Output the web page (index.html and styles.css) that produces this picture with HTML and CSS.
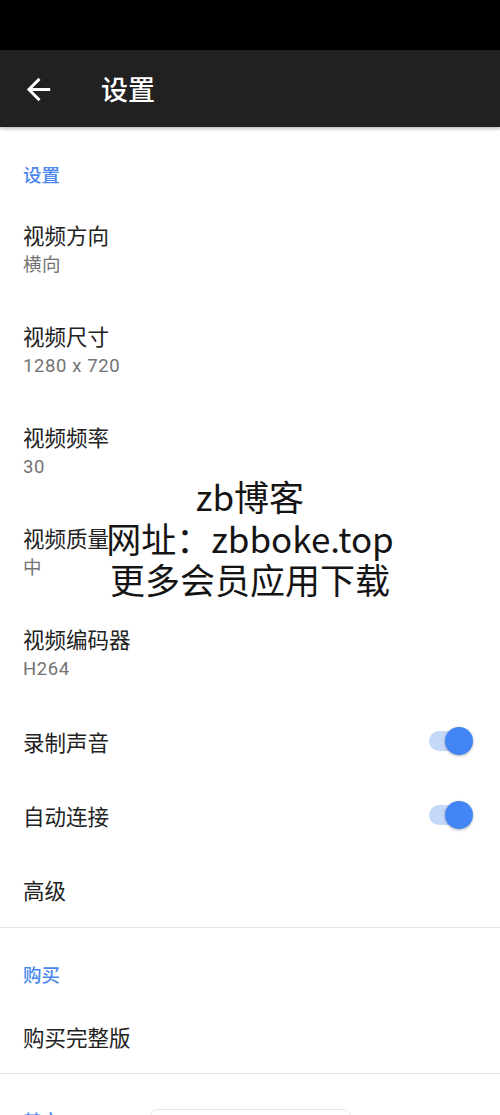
FILE: index.html
```html
<!DOCTYPE html>
<html lang="zh-CN">
<head>
<meta charset="utf-8">
<title>设置</title>
<link rel="stylesheet" href="styles.css">
</head>
<body>
<div class="screen">
  <div class="statusbar"></div>
  <header class="appbar">
    <svg class="back" viewBox="0 0 24 24" width="35" height="35"><path fill="#fff" d="M20 11H7.83l5.59-5.59L12 4l-8 8 8 8 1.41-1.41L7.83 13H20v-2z"/></svg>
    <h1 class="appbar-title">设置</h1>
  </header>
  <main class="content">
    <section class="group">
      <div class="group-header first">设置</div>
      <div class="row two"><div class="row-title">视频方向</div><div class="row-sub">横向</div></div>
      <div class="row two"><div class="row-title">视频尺寸</div><div class="row-sub">1280 x 720</div></div>
      <div class="row two"><div class="row-title">视频频率</div><div class="row-sub">30</div></div>
      <div class="row two"><div class="row-title">视频质量</div><div class="row-sub">中</div></div>
      <div class="row two"><div class="row-title">视频编码器</div><div class="row-sub">H264</div></div>
      <div class="row one"><div class="row-title">录制声音</div><span class="switch"><span class="track"></span><span class="knob"></span></span></div>
      <div class="row one"><div class="row-title">自动连接</div><span class="switch"><span class="track"></span><span class="knob"></span></span></div>
      <div class="row one last"><div class="row-title">高级</div></div>
    </section>
    <section class="group">
      <div class="group-header">购买</div>
      <div class="row one"><div class="row-title">购买完整版</div></div>
    </section>
    <section class="group">
      <div class="group-header">其它</div>
    </section>
  </main>
  <div class="watermark">
    <div>zb博客</div>
    <div>网址：zbboke.top</div>
    <div>更多会员应用下载</div>
  </div>
  <div class="toast"></div>
</div>
</body>
</html>
```

FILE: styles.css
```css
* { box-sizing: border-box; margin: 0; padding: 0; }
html, body { width: 500px; height: 1115px; overflow: hidden; background: #fff; }
body { font-family: Roboto, "Noto Sans CJK SC", sans-serif; color: #212121; }
.screen { position: relative; width: 500px; height: 1115px; overflow: hidden; }
.statusbar { height: 50px; background: #000; }
.appbar {
  height: 77px; background: #212121; display: flex; align-items: center;
  box-shadow: 0 2px 3px rgba(0,0,0,0.25); position: relative; z-index: 1;
}
.back { margin-left: 21px; margin-top: 1px; display: block; }
.appbar-title {
  margin-left: 45px; font-size: 27px; font-weight: 500; color: #fff;
  font-family: "Noto Sans CJK SC", sans-serif; line-height: 1;
}
.group { border-bottom: 1px solid #e2e2e2; }
.group-header {
  padding: 33px 23px 12px; font-size: 18.5px; line-height: 26px; color: #4a87ee;
  font-weight: 500; font-family: "Noto Sans CJK SC", sans-serif;
}
.group-header.first { padding-top: 34px; }
.row { display: flex; padding: 0 23px; }
.row.two { height: 101px; flex-direction: column; justify-content: center; }
.row.one { height: 74px; align-items: center; justify-content: space-between; }
.row.one.last { height: 75px; }
.row-title { font-size: 21.5px; line-height: 29px; color: #222; font-family: "Noto Sans CJK SC", sans-serif; }
.row-sub { font-size: 18.5px; line-height: 29px; margin-top: 2px; color: #737373; letter-spacing: 0.6px; }
.switch { position: relative; width: 45px; height: 28px; margin-right: 4px; }
.track { position: absolute; left: 1px; top: 4px; width: 40px; height: 20px; border-radius: 10px; background: #c4d8f8; }
.knob {
  position: absolute; right: 0; top: 0; width: 28px; height: 28px; border-radius: 50%;
  background: #4285f4; box-shadow: 0 1px 3px rgba(0,0,0,0.3);
}
.watermark {
  position: absolute; left: 0; right: 0; top: 475px; text-align: center;
  font-family: "Noto Sans CJK SC", sans-serif; font-size: 35px; line-height: 41.5px; color: #141414;
  padding-left: 0;
}
.toast {
  position: absolute; left: 150px; top: 1109px; width: 201px; height: 44px;
  border: 1px solid #e6e6e6; border-radius: 8px; background: #fff;
}
```
